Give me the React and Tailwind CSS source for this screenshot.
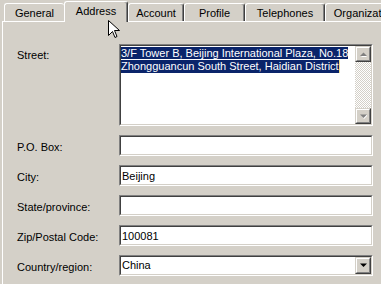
import React from 'react'

const font = { fontFamily: '"Liberation Sans", Arial, sans-serif' }

const Sunken = ({ className = '', children }) => (
  <div className={`border border-t-[#808080] border-l-[#808080] border-b-white border-r-white ${className}`}>
    <div className="h-full border border-t-[#404040] border-l-[#404040] border-b-[#d4d0c8] border-r-[#d4d0c8] bg-white">
      {children}
    </div>
  </div>
)

const Raised = ({ className = '', children }) => (
  <div className={`border border-t-[#d4d0c8] border-l-[#d4d0c8] border-b-[#404040] border-r-[#404040] ${className}`}>
    <div className="flex h-full items-center justify-center border border-t-white border-l-white border-b-[#808080] border-r-[#808080] bg-[#d4d0c8]">
      {children}
    </div>
  </div>
)

const Arrow = ({ up, disabled }) => (
  <svg width="7" height="5" viewBox="0 0 7 5" className="block">
    {disabled && (
      <polygon points={up ? '1,5 4,2 7,5' : '1,1 8,1 4,5'} fill="#ffffff" />
    )}
    <polygon
      points={up ? '0,4 3.5,0.5 7,4' : '0,0.5 7,0.5 3.5,4'}
      fill={disabled ? '#808080' : '#000000'}
    />
  </svg>
)

const Tab = ({ label, width, first }) => (
  <div
    className={`flex h-[18px] shrink-0 items-center justify-center rounded-t-[3px] border-t border-l border-white ${
      first ? '' : 'border-r border-r-[#404040] shadow-[inset_-1px_0_0_#808080]'
    }`}
    style={{ width }}
  >
    <span className="pt-[1px]">{label}</span>
  </div>
)

const Row = ({ label, children }) => (
  <div className="flex items-center">
    <div className="w-[102px] shrink-0 pt-[3px]">{label}</div>
    {children}
  </div>
)

export default function App() {
  return (
    <div className="relative h-[284px] w-[381px] overflow-hidden bg-[#d4d0c8] text-[11px] leading-[13px] text-black" style={font}>
      <div className="flex h-[21px] items-end pl-[4px]">
        <Tab label="General" width={60} first />
        <div className="relative z-10 mb-[-1px] flex h-[21px] w-[64px] shrink-0 items-start justify-center rounded-t-[3px] border-t border-l border-white border-r border-r-[#404040] bg-[#d4d0c8] pt-[3px] shadow-[inset_-1px_0_0_#808080]">
          Address
        </div>
        <Tab label="Account" width={56} />
        <Tab label="Profile" width={61} />
        <Tab label="Telephones" width={80} />
        <Tab label="Organization" width={80} />
      </div>

      <div className="ml-[2px] flex h-[300px] w-[400px] flex-col gap-[9px] border-t border-l border-white pt-[22px] pl-[14px]">
        <div className="flex items-start">
          <div className="w-[102px] shrink-0 pt-[5px]">Street:</div>
          <Sunken className="h-[82px] w-[254px]">
            <div className="flex h-full">
              <div className="flex-1 pt-[1px] text-white">
                <div>
                  <span className="bg-[#0a246a]">3/F Tower B, Beijing International Plaza, No.18</span>
                </div>
                <div className="flex items-start">
                  <span className="bg-[#0a246a]">Zhongguancun South Street, Haidian District</span>
                  <span className="inline-block h-[13px] w-[1px] bg-[#f0dc8c]" />
                </div>
              </div>
              <div className="flex w-[16px] flex-col bg-[repeating-conic-gradient(#d4d0c8_0_25%,#ffffff_0_50%)] bg-[length:2px_2px]">
                <Raised className="h-[16px]">
                  <Arrow up disabled />
                </Raised>
                <div className="flex-1" />
                <Raised className="h-[16px]">
                  <Arrow disabled />
                </Raised>
              </div>
            </div>
          </Sunken>
        </div>

        <Row label="P.O. Box:">
          <Sunken className="h-[21px] w-[254px]" />
        </Row>
        <Row label="City:">
          <Sunken className="h-[21px] w-[254px]">
            <div className="pt-[3px] pl-[1px]">Beijing</div>
          </Sunken>
        </Row>
        <Row label="State/province:">
          <Sunken className="h-[21px] w-[254px]" />
        </Row>
        <Row label="Zip/Postal Code:">
          <Sunken className="h-[21px] w-[254px]">
            <div className="pt-[3px] pl-[1px]">100081</div>
          </Sunken>
        </Row>
        <Row label="Country/region:">
          <Sunken className="h-[21px] w-[254px]">
            <div className="flex h-full items-center">
              <div className="flex-1 pl-[1px]">China</div>
              <Raised className="h-[17px] w-[16px]">
                <Arrow />
              </Raised>
            </div>
          </Sunken>
        </Row>
      </div>

      <svg
        className="absolute left-[108px] top-[20px] z-20"
        width="12"
        height="19"
        viewBox="0 0 12 19"
      >
        <polygon
          points="0.5,0.5 0.5,15.5 4.5,11.5 7,17.5 9,16.5 6.5,10.5 11.5,10.5"
          fill="#ffffff"
          stroke="#000000"
          strokeWidth="1"
        />
      </svg>
    </div>
  )
}
